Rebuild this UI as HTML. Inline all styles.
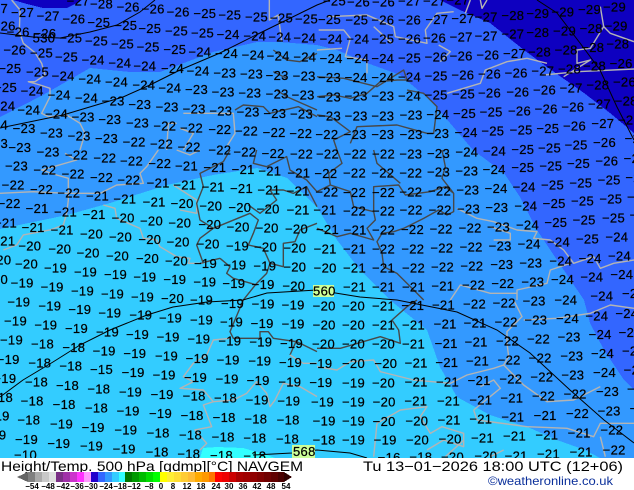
<!DOCTYPE html>
<html><head><meta charset="utf-8"><title>Height/Temp. 500 hPa</title>
<style>html,body{margin:0;padding:0;background:#fff;width:634px;height:490px;overflow:hidden}svg{display:block}
text{font-family:"Liberation Sans",sans-serif}
.l{font-size:39px;fill:#000;stroke:#000;stroke-width:.7px;letter-spacing:1px}
.g{fill:none;stroke:#b4b4b4;stroke-width:4.2;stroke-linejoin:round}
.d{fill:none;stroke:#484848;stroke-width:4.2;stroke-linejoin:round}
</style></head><body>
<svg width="634" height="490" viewBox="0 0 634 490" xmlns="http://www.w3.org/2000/svg">
<rect width="634" height="458" fill="#3366ff"/>
<g shape-rendering="crispEdges">
<polygon fill="#3399ff" points="0,117 43,95 90,68 130,72 160,72 213,52 257,42 280,42 317,45 337,50 367,63 400,75 430,100 450,123 473,150 504,173 520,197 537,230 557,260 584,300 590,323 604,350 624,380 634,390 634,458 0,458"/>
<polygon fill="#33ccff" points="0,229 67,215 110,203 167,185 213,175 257,168 287,178 317,207 337,240 360,270 390,300 427,330 440,367 457,397 490,415 530,428 557,440 585,450 600,458 0,458"/>
<polygon fill="#33ffff" points="200,458 203,448 217,447 243,448 267,455 275,458"/>
<polygon fill="#0e00c0" points="440,0 460,10 490,23 524,50 547,67 584,93 610,113 634,133 634,0"/>
<polygon fill="#0e00c0" points="13,0 27,4 43,8 67,8 77,3 82,0"/>
</g>
<!-- borders -->
<g transform="translate(0 0) scale(.33333)">
<path class="g" d="M35 0L60 30L58 95L70 130L105 158L125 190L135 225L105 245L85 245L120 255L150 265L150 290L125 340L145 350L200 345L240 370L255 400L240 450"/>
<path class="g" d="M808 0V60L835 45L845 125M500 450L505 370L530 370M540 385L580 400L550 450M550 340L700 340L705 400L680 440"/>
<path class="d" d="M820 150L860 180L900 185L951 160M820 215L860 235M830 270L860 290L951 330M705 330L730 315L790 320L810 340L895 320L951 350"/>
</g>
<g transform="translate(317 0) scale(.33333)">
<path class="g" d="M5 90L80 90L100 115L85 170L150 180L150 220M30 50L150 45L230 80L235 110L330 130L325 90L360 40L410 35M170 80L225 130M365 135L400 155L370 185M390 280L490 250L505 210L570 185L630 175L690 190M680 225L780 215L951 207M850 20L860 80L820 145L780 150L780 190L820 180L780 205L740 230M860 80L880 100L951 125M490 0L495 25L510 0M460 0L445 40M0 150L75 145"/>
<path class="d" d="M0 230L80 235L180 260L260 210L270 240L240 240L190 245L150 280L100 295L50 285L0 290M270 270L320 280L360 320L350 400L330 400L240 375L120 380L100 430M0 345L40 350L100 395L50 420L60 450"/>
</g>
<g transform="translate(0 150) scale(.33333)">
<path class="g" d="M530 0L570 15L600 0M195 10L230 30L160 50L125 60L170 75L205 85L205 150L200 190L190 225L150 240L70 255L50 285L10 300M0 130L100 125L200 130L300 130L350 105L430 100L420 70L440 50L475 0M310 165L345 175L350 205L420 235L430 265L470 270L480 290L530 320L570 325L565 340L610 340M520 105L590 150L590 190L540 180"/>
<path class="d" d="M690 0L670 35L600 70L610 110L590 160L600 210L640 235L600 265L590 285L610 340M640 235L750 190L775 210L760 250L745 285L790 295L810 340L800 370L770 400L730 450M660 325L690 350L680 370L700 385L770 405M600 340L660 325M745 165L780 190L830 150L810 120L850 120L880 130L920 110L951 170M810 340L850 350L850 280L885 275L900 240L951 220M770 0L760 40L800 50L860 20L870 60L920 90L951 125"/>
</g>
<g transform="translate(317 150) scale(.33333)">
<path class="d" d="M60 0L75 40L35 70L40 105L0 125M40 105L100 125L110 170L170 185L170 110L245 105L265 135L340 125L385 110L410 130L410 185L390 195L365 180L320 205L260 235L230 245L195 250L180 275L195 310L200 350L240 370L280 410L320 450M375 0L385 50L375 85L410 130M170 0L180 40L250 100M170 185L175 210L150 235L170 270L100 250L60 260L0 235"/>
<path class="g" d="M420 175L480 205L530 215L600 240L660 245L650 265L700 270L740 300L770 340L830 320L850 355L890 340L951 330M520 230L580 250L580 270L530 270M760 340L700 360L690 400L600 420L600 450M600 430L520 430L430 405L400 450"/>
</g>
<g transform="translate(0 300) scale(.33333)">
<path class="d" d="M730 0L690 95L700 115L780 115L780 95L805 95L820 115L890 125L951 155M890 120L870 165"/>
<path class="g" d="M690 115L640 120L620 165L580 190L550 230L580 245L540 265L610 270L640 305L610 315L635 380L585 390L620 430L600 450M640 305L700 300L740 280L770 245L800 280L810 320L825 300L850 250L900 260L951 290M870 165L910 190L951 190"/>
</g>
<g transform="translate(317 300) scale(.33333)">
<path class="d" d="M0 145L70 145L190 110L250 130L245 90L225 60L270 20L300 0"/>
<path class="g" d="M0 200L60 210L100 185L170 180L190 215L290 240L400 250L450 225L530 205L560 195L620 255L690 305L770 300L850 260M570 130L575 170L560 195M590 0L615 50L570 95L570 130M620 60L720 55L820 40L880 15L951 25M470 330L550 265L530 240L490 260M470 330L480 360L630 380L750 385L830 410L850 370L951 370M180 370L250 330L330 320L310 350L340 400L375 380L440 400L440 440L380 420L330 450M170 470L180 370M850 410L865 470M385 470L430 430L440 420M520 470L560 450"/>
</g>
<!-- contours -->
<g fill="none" stroke="#000" stroke-width="1">
<polyline points="0,33 33,37 60,38 90,32 117,25 140,12 155,0"/>
<polyline points="0,128 63,115 123,97 150,85 180,70 220,53 260,33 317,5 330,0"/>
<polyline points="537,0 557,13 580,43 600,70 617,107 634,140"/>
<polyline points="0,397 23,380 53,362 80,345 110,330 147,315 173,307 207,302 243,300 267,293 317,290 360,297 397,300 457,312 497,330 530,353 570,390 604,420 634,443"/>
<polyline points="253,455 292,453 317,450 350,453 367,458"/>
</g>
<rect x="313" y="285" width="21" height="12" fill="#ccff99"/>
<rect x="292" y="445" width="23" height="13" fill="#ccff99"/>
<!-- labels crop 1 -->
<g class="l" transform="translate(0 0) scale(.33333) translate(0 14)">
<text x="-45" y="25">−27</text><text x="33" y="37">−27</text><text x="110" y="47">−27</text><text x="187" y="57">−26</text><text x="262" y="67">−25</text><text x="343" y="76">−25</text><text x="415" y="85">−25</text><text x="495" y="92">−25</text><text x="573" y="98">−25</text><text x="650" y="103">−24</text><text x="730" y="107">−24</text><text x="805" y="110">−24</text><text x="880" y="113">−24</text>
<text x="200" y="3">−27</text><text x="270" y="12">−28</text><text x="350" y="20">−26</text><text x="425" y="27">−26</text><text x="500" y="35">−26</text><text x="580" y="40">−25</text><text x="655" y="45">−25</text><text x="735" y="50">−25</text><text x="810" y="53">−25</text><text x="885" y="57">−25</text>
<text x="-22" y="78">−26</text><text x="20" y="95">−26</text><text x="100" y="100">−26</text><text x="98" y="114">530</text><text x="178" y="113">−25</text><text x="255" y="123">−25</text><text x="333" y="132">−25</text><text x="410" y="140">−25</text><text x="490" y="148">−25</text><text x="565" y="155">−24</text><text x="645" y="160">−24</text><text x="725" y="165">−24</text><text x="800" y="168">−24</text><text x="880" y="170">−24</text>
<text x="10" y="150">−26</text><text x="90" y="158">−25</text><text x="165" y="170">−25</text><text x="245" y="180">−24</text><text x="325" y="188">−24</text><text x="400" y="197">−24</text><text x="483" y="205">−24</text><text x="560" y="212">−24</text><text x="640" y="218">−23</text><text x="720" y="222">−23</text><text x="797" y="226">−23</text><text x="878" y="228">−23</text>
<text x="-5" y="205">−25</text><text x="78" y="215">−25</text><text x="155" y="228">−24</text><text x="235" y="237">−24</text><text x="315" y="245">−24</text><text x="397" y="255">−24</text><text x="475" y="263">−24</text><text x="555" y="268">−23</text><text x="635" y="275">−23</text><text x="715" y="278">−23</text><text x="797" y="282">−23</text><text x="875" y="285">−23</text>
<text x="-18" y="262">−25</text><text x="62" y="273">−24</text><text x="143" y="285">−24</text><text x="225" y="293">−24</text><text x="305" y="303">−23</text><text x="385" y="313">−23</text><text x="467" y="320">−23</text><text x="548" y="327">−23</text><text x="628" y="332">−23</text><text x="710" y="335">−23</text><text x="790" y="340">−23</text><text x="870" y="342">−23</text>
<text x="-23" y="318">−24</text><text x="52" y="330">−24</text><text x="135" y="342">−24</text><text x="215" y="350">−23</text><text x="295" y="358">−23</text><text x="378" y="368">−23</text><text x="460" y="377">−22</text><text x="540" y="383">−22</text><text x="625" y="388">−22</text><text x="705" y="392">−22</text><text x="788" y="397">−22</text><text x="868" y="400">−22</text>
<text x="-45" y="375">−24</text><text x="38" y="385">−23</text><text x="120" y="398">−23</text><text x="203" y="407">−23</text><text x="285" y="415">−23</text><text x="368" y="425">−22</text><text x="450" y="432">−22</text><text x="533" y="440">−22</text>
<text x="-45" y="430">−23</text><text x="25" y="442">−23</text>
</g>
<!-- crop 2 -->
<g class="l" transform="translate(317 0) scale(.33333) translate(0 14)">
<text x="18" y="3">−25</text><text x="90" y="5">−26</text><text x="165" y="5">−26</text><text x="243" y="3">−27</text><text x="318" y="3">−27</text><text x="388" y="0">−27</text>
<text x="3" y="58">−25</text><text x="85" y="60">−25</text><text x="163" y="60">−26</text><text x="243" y="60">−26</text><text x="325" y="58">−27</text><text x="403" y="55">−27</text><text x="473" y="50">−27</text><text x="553" y="46">−28</text><text x="628" y="40">−29</text><text x="703" y="35">−29</text><text x="783" y="28">−29</text><text x="858" y="20">−29</text>
<text x="8" y="117">−24</text><text x="88" y="117">−24</text><text x="163" y="117">−25</text><text x="243" y="117">−26</text><text x="318" y="113">−26</text><text x="398" y="110">−27</text><text x="473" y="107">−27</text><text x="553" y="102">−27</text><text x="628" y="97">−28</text><text x="708" y="93">−29</text><text x="788" y="85">−28</text><text x="863" y="77">−29</text>
<text x="8" y="175">−24</text><text x="88" y="175">−24</text><text x="163" y="175">−24</text><text x="243" y="173">−25</text><text x="323" y="170">−26</text><text x="398" y="168">−26</text><text x="478" y="165">−26</text><text x="558" y="160">−27</text><text x="633" y="155">−28</text><text x="713" y="150">−28</text><text x="793" y="142">−28</text><text x="868" y="132">−28</text>
<text x="3" y="232">−23</text><text x="83" y="232">−24</text><text x="163" y="232">−24</text><text x="243" y="230">−24</text><text x="323" y="228">−25</text><text x="403" y="225">−26</text><text x="483" y="222">−26</text><text x="563" y="218">−26</text><text x="643" y="212">−27</text><text x="723" y="207">−28</text><text x="798" y="197">−28</text><text x="878" y="190">−26</text>
<text x="3" y="290">−23</text><text x="83" y="288">−23</text><text x="163" y="288">−23</text><text x="243" y="288">−24</text><text x="323" y="285">−25</text><text x="405" y="282">−25</text><text x="483" y="279">−26</text><text x="568" y="275">−26</text><text x="648" y="270">−26</text><text x="728" y="264">−27</text><text x="808" y="255">−28</text><text x="888" y="245">−26</text>
<text x="3" y="347">−23</text><text x="83" y="347">−23</text><text x="163" y="347">−23</text><text x="248" y="345">−23</text><text x="328" y="343">−24</text><text x="408" y="340">−25</text><text x="488" y="336">−25</text><text x="573" y="333">−26</text><text x="653" y="327">−26</text><text x="733" y="320">−26</text><text x="813" y="312">−27</text><text x="893" y="303">−28</text>
<text x="-5" y="403">−22</text><text x="80" y="403">−23</text><text x="163" y="403">−23</text><text x="248" y="403">−23</text><text x="328" y="400">−23</text><text x="413" y="397">−24</text><text x="493" y="393">−25</text><text x="578" y="390">−25</text><text x="658" y="385">−25</text><text x="738" y="378">−26</text><text x="823" y="370">−27</text><text x="903" y="360">−28</text>
<text x="415" y="455">−24</text><text x="498" y="452">−24</text><text x="583" y="448">−25</text><text x="663" y="443">−25</text><text x="743" y="435">−25</text><text x="828" y="427">−26</text><text x="923" y="415">−26</text>
</g>
<!-- crop 5 -->
<g class="l" transform="translate(0 150) scale(.33333) translate(0 14)">
<text x="110" y="5">−23</text><text x="195" y="15">−22</text><text x="280" y="23">−22</text><text x="360" y="33">−22</text><text x="445" y="40">−22</text><text x="525" y="47">−21</text><text x="610" y="52">−21</text><text x="695" y="58">−21</text><text x="775" y="63">−21</text><text x="862" y="68">−21</text>
<text x="625" y="0">−22</text><text x="700" y="5">−22</text><text x="785" y="10">−22</text><text x="870" y="12">−22</text>
<text x="15" y="48">−23</text><text x="100" y="60">−22</text><text x="185" y="72">−22</text><text x="270" y="82">−22</text><text x="352" y="90">−22</text><text x="440" y="98">−21</text><text x="520" y="105">−21</text><text x="605" y="110">−21</text><text x="690" y="115">−21</text><text x="772" y="120">−21</text><text x="860" y="123">−21</text>
<text x="5" y="105">−22</text><text x="90" y="118">−22</text><text x="172" y="128">−22</text><text x="258" y="138">−21</text><text x="340" y="147">−21</text><text x="428" y="155">−21</text><text x="512" y="160">−20</text><text x="598" y="167">−20</text><text x="685" y="172">−20</text><text x="770" y="177">−20</text><text x="860" y="180">−21</text>
<text x="-7" y="160">−22</text><text x="77" y="175">−21</text><text x="162" y="185">−21</text><text x="248" y="193">−21</text><text x="335" y="203">−20</text><text x="420" y="212">−20</text><text x="505" y="218">−20</text><text x="595" y="223">−20</text><text x="680" y="230">−20</text><text x="767" y="233">−20</text><text x="855" y="237">−20</text>
<text x="-18" y="218">−21</text><text x="65" y="232">−21</text><text x="152" y="240">−21</text><text x="240" y="252">−20</text><text x="327" y="260">−20</text><text x="415" y="268">−20</text><text x="500" y="275">−20</text><text x="590" y="282">−20</text><text x="678" y="287">−19</text><text x="762" y="290">−20</text><text x="850" y="293">−20</text>
<text x="-23" y="273">−21</text><text x="55" y="287">−20</text><text x="145" y="297">−20</text><text x="230" y="308">−20</text><text x="318" y="317">−20</text><text x="408" y="325">−20</text><text x="495" y="333">−20</text><text x="582" y="340">−19</text><text x="670" y="344">−19</text><text x="760" y="347">−19</text><text x="850" y="350">−20</text>
<text x="-35" y="330">−20</text><text x="45" y="342">−20</text><text x="132" y="353">−19</text><text x="222" y="365">−19</text><text x="312" y="373">−19</text><text x="400" y="380">−19</text><text x="490" y="388">−19</text><text x="580" y="395">−19</text><text x="667" y="400">−19</text><text x="755" y="403">−19</text><text x="847" y="407">−20</text>
<text x="-45" y="388">−20</text><text x="32" y="398">−19</text><text x="122" y="410">−19</text><text x="213" y="422">−19</text><text x="303" y="432">−19</text><text x="393" y="440">−19</text><text x="483" y="445">−20</text><text x="570" y="450">−19</text><text x="663" y="460">−19</text><text x="755" y="462">−19</text><text x="845" y="465">−19</text>
</g>
<!-- crop 6 -->
<g class="l" transform="translate(317 150) scale(.33333) translate(0 14)">
<text x="-3" y="12">−22</text><text x="80" y="12">−22</text><text x="165" y="12">−22</text><text x="247" y="12">−23</text><text x="330" y="10">−23</text>
<text x="-8" y="70">−22</text><text x="78" y="68">−22</text><text x="163" y="68">−22</text><text x="247" y="68">−22</text><text x="330" y="66">−23</text><text x="415" y="63">−23</text><text x="497" y="58">−24</text><text x="583" y="52">−25</text><text x="667" y="47">−25</text><text x="750" y="40">−25</text><text x="835" y="33">−26</text><text x="920" y="25">−25</text>
<text x="-5" y="125">−22</text><text x="78" y="127">−22</text><text x="165" y="127">−22</text><text x="247" y="125">−22</text><text x="333" y="123">−22</text><text x="418" y="120">−23</text><text x="503" y="115">−24</text><text x="587" y="110">−24</text><text x="672" y="105">−25</text><text x="757" y="98">−25</text><text x="842" y="90">−25</text><text x="925" y="82">−25</text>
<text x="-11" y="180">−21</text><text x="78" y="183">−22</text><text x="165" y="183">−22</text><text x="248" y="180">−22</text><text x="335" y="180">−22</text><text x="420" y="177">−23</text><text x="505" y="172">−23</text><text x="592" y="167">−24</text><text x="677" y="160">−25</text><text x="762" y="153">−25</text><text x="847" y="147">−25</text><text x="930" y="140">−25</text>
<text x="-3" y="238">−21</text><text x="80" y="240">−21</text><text x="165" y="240">−22</text><text x="252" y="238">−22</text><text x="338" y="237">−22</text><text x="425" y="233">−22</text><text x="510" y="230">−23</text><text x="597" y="225">−24</text><text x="682" y="217">−25</text><text x="767" y="210">−25</text><text x="855" y="203">−25</text><text x="938" y="195">−25</text>
<text x="-10" y="297">−21</text><text x="78" y="297">−21</text><text x="165" y="297">−22</text><text x="253" y="296">−22</text><text x="340" y="294">−22</text><text x="428" y="291">−22</text><text x="515" y="287">−23</text><text x="602" y="282">−24</text><text x="690" y="275">−24</text><text x="777" y="267">−25</text><text x="865" y="260">−24</text>
<text x="-10" y="353">−20</text><text x="78" y="353">−21</text><text x="165" y="353">−21</text><text x="255" y="353">−22</text><text x="342" y="350">−22</text><text x="430" y="347">−22</text><text x="520" y="343">−23</text><text x="607" y="338">−23</text><text x="697" y="332">−24</text><text x="785" y="325">−24</text><text x="873" y="317">−24</text>
<text x="78" y="410">−21</text><text x="165" y="410">−21</text><text x="255" y="410">−21</text><text x="343" y="407">−21</text><text x="435" y="404">−22</text><text x="523" y="400">−22</text><text x="613" y="395">−23</text><text x="702" y="388">−24</text><text x="790" y="380">−24</text><text x="880" y="373">−24</text>
<text x="-12" y="423">560</text>
<text x="820" y="437">−24</text><text x="915" y="430">−24</text>
</g>
<!-- crop 7 -->
<g class="l" transform="translate(0 300) scale(.33333) translate(0 14)">
<text x="22" y="5">−19</text><text x="115" y="18">−19</text><text x="205" y="28">−19</text><text x="295" y="38">−19</text><text x="388" y="45">−19</text><text x="477" y="53">−19</text><text x="570" y="60">−19</text><text x="660" y="66">−19</text><text x="752" y="70">−19</text><text x="845" y="72">−19</text>
<text x="12" y="63">−19</text><text x="103" y="75">−19</text><text x="195" y="85">−19</text><text x="288" y="95">−19</text><text x="378" y="103">−19</text><text x="470" y="110">−19</text><text x="562" y="117">−19</text><text x="655" y="122">−19</text><text x="748" y="126">−19</text><text x="840" y="130">−19</text>
<text x="0" y="120">−19</text><text x="93" y="132">−18</text><text x="187" y="142">−18</text><text x="278" y="153">−19</text><text x="370" y="160">−19</text><text x="465" y="168">−19</text><text x="557" y="175">−19</text><text x="650" y="180">−19</text><text x="745" y="183">−19</text><text x="837" y="187">−19</text>
<text x="-10" y="178">−19</text><text x="85" y="188">−18</text><text x="178" y="198">−18</text><text x="270" y="208">−15</text><text x="365" y="217">−19</text><text x="458" y="225">−19</text><text x="552" y="232">−19</text><text x="647" y="237">−19</text><text x="740" y="241">−19</text><text x="835" y="245">−19</text>
<text x="-20" y="235">−19</text><text x="75" y="245">−18</text><text x="168" y="256">−18</text><text x="262" y="266">−18</text><text x="357" y="275">−19</text><text x="452" y="283">−19</text><text x="548" y="288">−18</text><text x="642" y="293">−18</text><text x="737" y="299">−19</text><text x="832" y="303">−19</text>
<text x="-30" y="292">−18</text><text x="62" y="303">−18</text><text x="158" y="313">−18</text><text x="255" y="323">−18</text><text x="350" y="333">−19</text><text x="447" y="340">−19</text><text x="542" y="346">−18</text><text x="638" y="352">−18</text><text x="733" y="357">−18</text><text x="830" y="360">−18</text>
<text x="-40" y="348">−19</text><text x="52" y="360">−18</text><text x="150" y="372">−19</text><text x="245" y="382">−19</text><text x="343" y="390">−19</text><text x="440" y="398">−18</text><text x="537" y="405">−18</text><text x="635" y="410">−18</text><text x="730" y="414">−18</text><text x="828" y="417">−18</text>
<text x="-50" y="405">−19</text><text x="45" y="418">−19</text><text x="142" y="430">−19</text><text x="240" y="438">−19</text><text x="338" y="447">−19</text><text x="437" y="455">−18</text><text x="532" y="462">−18</text><text x="630" y="466">−18</text><text x="730" y="468">−18</text><text x="42" y="465">−10</text>
</g>
<text class="l" transform="translate(293 456) scale(.33333)" x="0" y="0">568</text>
<!-- crop 8 -->
<g class="l" transform="translate(317 300) scale(.33333) translate(0 14)">
<text x="-13" y="18">−20</text><text x="75" y="18">−20</text><text x="165" y="18">−21</text><text x="253" y="16">−21</text><text x="345" y="15">−21</text><text x="438" y="12">−22</text><text x="527" y="8">−22</text><text x="617" y="3">−23</text><text x="712" y="0">−24</text>
<text x="-13" y="75">−20</text><text x="75" y="75">−20</text><text x="165" y="75">−21</text><text x="255" y="75">−21</text><text x="350" y="72">−21</text><text x="440" y="68">−21</text><text x="533" y="65">−22</text><text x="622" y="60">−23</text><text x="717" y="55">−24</text><text x="805" y="47">−24</text><text x="895" y="40">−24</text>
<text x="-15" y="132">−20</text><text x="75" y="132">−20</text><text x="165" y="132">−20</text><text x="255" y="132">−21</text><text x="353" y="130">−21</text><text x="443" y="125">−21</text><text x="537" y="122">−22</text><text x="630" y="117">−22</text><text x="722" y="110">−23</text><text x="815" y="103">−24</text><text x="905" y="97">−24</text>
<text x="-23" y="190">−19</text><text x="75" y="190">−20</text><text x="172" y="190">−20</text><text x="263" y="188">−21</text><text x="355" y="187">−21</text><text x="447" y="183">−21</text><text x="542" y="180">−22</text><text x="635" y="173">−22</text><text x="730" y="167">−23</text><text x="822" y="160">−24</text><text x="915" y="153">−24</text>
<text x="-23" y="247">−19</text><text x="75" y="248">−19</text><text x="165" y="248">−20</text><text x="263" y="246">−21</text><text x="357" y="245">−21</text><text x="452" y="241">−21</text><text x="547" y="237">−22</text><text x="640" y="231">−22</text><text x="733" y="225">−23</text><text x="828" y="217">−24</text><text x="920" y="210">−24</text>
<text x="-18" y="305">−19</text><text x="75" y="305">−19</text><text x="167" y="305">−20</text><text x="262" y="303">−21</text><text x="360" y="302">−21</text><text x="457" y="299">−21</text><text x="550" y="294">−21</text><text x="645" y="288">−22</text><text x="740" y="282">−22</text><text x="837" y="274">−23</text><text x="930" y="267">−24</text>
<text x="-13" y="362">−19</text><text x="75" y="362">−19</text><text x="167" y="364">−20</text><text x="265" y="362">−20</text><text x="362" y="360">−21</text><text x="457" y="356">−21</text><text x="553" y="351">−21</text><text x="650" y="346">−21</text><text x="747" y="340">−22</text><text x="842" y="332">−23</text><text x="938" y="325">−23</text>
<text x="-13" y="420">−18</text><text x="75" y="420">−19</text><text x="170" y="420">−19</text><text x="267" y="420">−20</text><text x="365" y="417">−20</text><text x="462" y="413">−21</text><text x="558" y="408">−21</text><text x="655" y="404">−21</text><text x="752" y="398">−21</text><text x="850" y="390">−22</text>
<text x="857" y="450">−22</text><text x="758" y="455">−21</text><text x="660" y="462">−21</text><text x="563" y="467">−21</text><text x="472" y="467">−20</text><text x="372" y="470">−20</text><text x="277" y="470">−18</text><text x="182" y="472">−16</text>
</g>
<!-- footer -->
<rect y="458" width="634" height="32" fill="#fff"/>
<text x="1" y="471" font-size="14" textLength="302" lengthAdjust="spacingAndGlyphs" fill="#000">Height/Temp. 500 hPa [gdmp][°C] NAVGEM</text>
<text x="363" y="471" font-size="14" textLength="260" lengthAdjust="spacingAndGlyphs" fill="#000">Tu 13−01−2026 18:00 UTC (12+06)</text>
<text x="488" y="485" font-size="12" textLength="125" lengthAdjust="spacingAndGlyphs" fill="#0a2f9a">©weatheronline.co.uk</text>
<g shape-rendering="crispEdges">
<polygon points="17,477 28,472 28,482" fill="#666"/>
<rect x="28" y="472" width="7" height="10" fill="#808080"/><rect x="35" y="472" width="7" height="10" fill="#aaaaaa"/><rect x="42" y="472" width="7" height="10" fill="#c8c8c8"/><rect x="49" y="472" width="7" height="10" fill="#e0e0e0"/>
<rect x="56" y="472" width="7" height="10" fill="#7a2f85"/><rect x="63" y="472" width="7" height="10" fill="#a030a8"/><rect x="70" y="472" width="7" height="10" fill="#cc33cc"/><rect x="77" y="472" width="7" height="10" fill="#ff33ff"/><rect x="84" y="472" width="7" height="10" fill="#ff99ff"/>
<rect x="91" y="472" width="7" height="10" fill="#2200cc"/><rect x="98" y="472" width="7" height="10" fill="#3366ff"/><rect x="105" y="472" width="7" height="10" fill="#3399ff"/><rect x="112" y="472" width="7" height="10" fill="#33ccff"/><rect x="119" y="472" width="6" height="10" fill="#33ffff"/>
<rect x="125" y="472" width="7" height="10" fill="#007700"/><rect x="132" y="472" width="7" height="10" fill="#009900"/><rect x="139" y="472" width="7" height="10" fill="#00bb00"/><rect x="146" y="472" width="7" height="10" fill="#00dd00"/><rect x="153" y="472" width="7" height="10" fill="#00ff00"/>
<rect x="160" y="472" width="7" height="10" fill="#ffff00"/><rect x="167" y="472" width="7" height="10" fill="#ffee33"/><rect x="174" y="472" width="7" height="10" fill="#ffdd33"/><rect x="181" y="472" width="7" height="10" fill="#ffcc33"/><rect x="188" y="472" width="7" height="10" fill="#ffbb33"/><rect x="195" y="472" width="7" height="10" fill="#ffaa00"/><rect x="202" y="472" width="7" height="10" fill="#ff9900"/><rect x="209" y="472" width="6" height="10" fill="#ff7700"/>
<rect x="215" y="472" width="7" height="10" fill="#ff0000"/><rect x="222" y="472" width="7" height="10" fill="#ee0000"/><rect x="229" y="472" width="7" height="10" fill="#cc0000"/><rect x="236" y="472" width="7" height="10" fill="#aa0000"/><rect x="243" y="472" width="7" height="10" fill="#a00000"/><rect x="250" y="472" width="7" height="10" fill="#900000"/><rect x="257" y="472" width="7" height="10" fill="#800000"/><rect x="264" y="472" width="7" height="10" fill="#700000"/><rect x="271" y="472" width="7" height="10" fill="#600000"/><rect x="278" y="472" width="6" height="10" fill="#4a0000"/>
<polygon points="284,472 292,477 284,482" fill="#300000"/>
</g>
<g font-size="8" font-weight="bold" text-anchor="middle" fill="#000">
<text x="32" y="489">−54</text><text x="48" y="489">−48</text><text x="63" y="489">−42</text><text x="77" y="489">−36</text><text x="91" y="489">−30</text><text x="106" y="489">−24</text><text x="120" y="489">−18</text><text x="134" y="489">−12</text><text x="149" y="489">−8</text><text x="161" y="489">0</text><text x="173" y="489">8</text><text x="187" y="489">12</text><text x="201" y="489">18</text><text x="216" y="489">24</text><text x="229" y="489">30</text><text x="243" y="489">36</text><text x="257" y="489">42</text><text x="271" y="489">48</text><text x="286" y="489">54</text>
</g>
</svg>
</body></html>
